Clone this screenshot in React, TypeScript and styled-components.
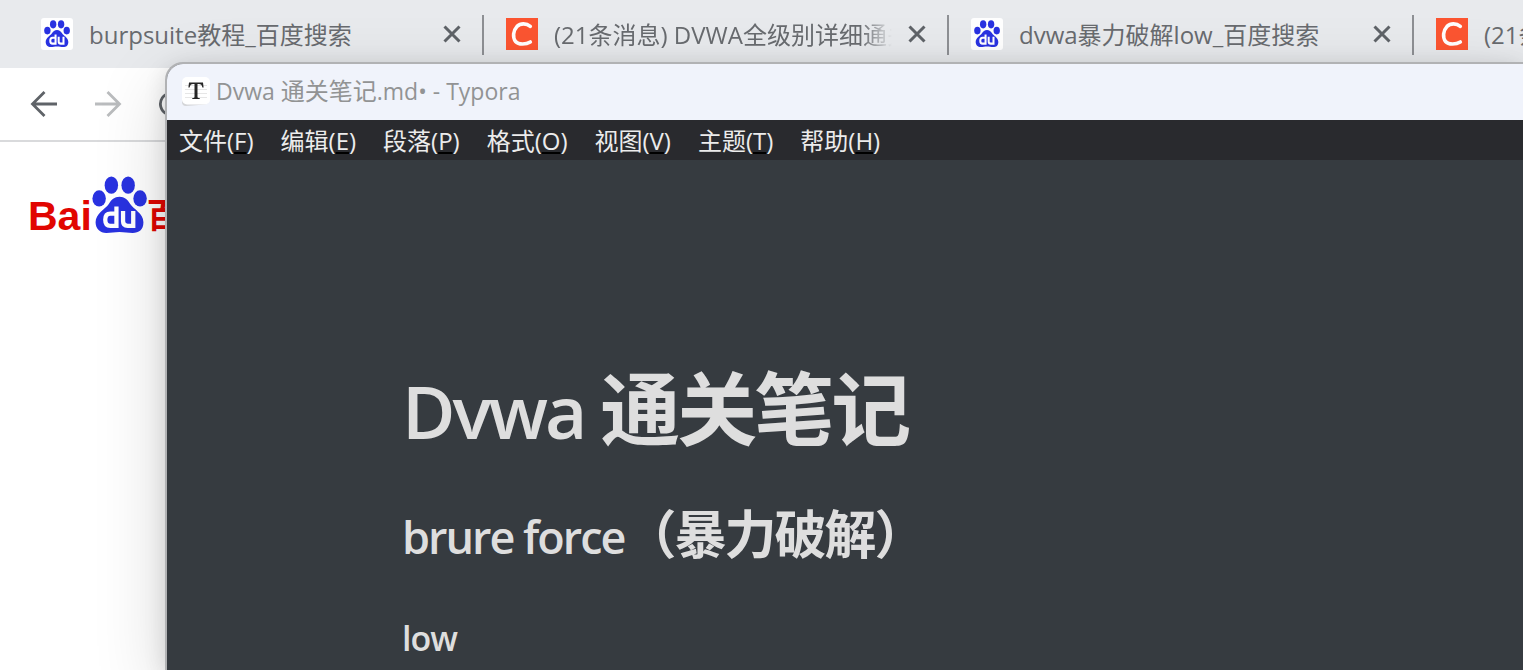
import React from 'react';
import styled, { createGlobalStyle } from 'styled-components';

const GlobalStyle = createGlobalStyle`
  * { box-sizing: border-box; }
  body {
    margin: 0;
    background: #fff;
    font-family: "Open Sans", "Noto Sans CJK SC", sans-serif;
    font-size: 24px;
    overflow: hidden;
  }
  button { font: inherit; border: 0; padding: 0; background: none; color: inherit; }
`;

const Desktop = styled.div`
  position: relative;
  min-height: 100vh;
  overflow: hidden;
`;

const TabStrip = styled.div`
  display: flex;
  height: 68px;
  padding: 15px 0 13px 19px;
  background: #e8eaed;
  overflow: hidden;
`;

const Tab = styled.div`
  display: flex;
  flex: 0 0 465px;
  min-width: 0;
  align-items: center;
  gap: 16px;
  padding: 0 21px 0 22px;
  border-right: 2px solid #8e9094;
  color: #686b6f;
`;

const TabTitle = styled.span<{ $fade?: boolean }>`
  flex: 1;
  min-width: 0;
  line-height: 40px;
  white-space: nowrap;
  overflow: hidden;
  ${p => p.$fade && 'mask-image: linear-gradient(to right, #000 91%, transparent);'}
`;

const Favicon = styled.svg`
  display: block;
  flex: none;
  width: 32px;
  height: 32px;
  margin-bottom: 2px;
`;

const CloseButton = styled.button`
  flex: none;
  width: 18px;
  height: 18px;
  margin-bottom: 2px;
  color: #5f6368;
  svg { display: block; }
`;

const Toolbar = styled.div`
  display: flex;
  align-items: center;
  gap: 36px;
  height: 74px;
  padding: 0 30px;
  border-bottom: 2px solid #d9dadc;
`;

const ToolButton = styled.button<{ $dim?: boolean }>`
  width: 28px;
  height: 28px;
  color: ${p => (p.$dim ? '#babcbe' : '#5f6368')};
  svg { display: block; }
`;

const LogoLink = styled.a`
  display: inline-flex;
  align-items: flex-end;
  height: 57px;
  margin: 34px 0 0 28px;
  color: #e10601;
  font-family: "Liberation Sans", "Noto Sans CJK SC", sans-serif;
  font-weight: 700;
  text-decoration: none;
  white-space: nowrap;
`;

const LogoWord = styled.span<{ $size: number }>`
  height: 44px;
  font-size: ${p => p.$size}px;
  line-height: 54px;
`;

const EditorWindow = styled.section`
  position: absolute;
  inset: 62px 0 0 165px;
  display: flex;
  flex-direction: column;
  border: solid #b1b2b4;
  border-width: 2px 0 0 2px;
  border-radius: 18px 0 0 0;
  background: #363b40;
  box-shadow: 0 24px 72px rgba(0, 0, 0, 0.16), 0 4px 22px rgba(0, 0, 0, 0.12);
  overflow: hidden;
`;

const TitleBar = styled.header`
  display: flex;
  align-items: center;
  gap: 6px;
  height: 56px;
  flex: none;
  padding: 0 0 2px 14px;
  background: #f0f3fb;
  color: #929394;
  white-space: nowrap;
`;

const WindowTitle = styled.span`
  line-height: 32px;
`;

const MenuBar = styled.nav`
  display: flex;
  flex: none;
  gap: 27px;
  height: 40px;
  padding: 1px 0 0 12px;
  background: #292a2e;
  color: #ececec;
`;

const MenuItem = styled.button`
  line-height: 40px;
  white-space: nowrap;
`;

const Mnemonic = styled.span`
  text-decoration: underline 2px #000;
  text-underline-offset: 2px;
  text-decoration-skip-ink: none;
`;

const Latin = styled.span<{ $size: number; $weight?: number }>`
  font-size: ${p => p.$size}px;
  font-weight: ${p => p.$weight ?? 400};
`;

const Document = styled.article`
  flex: 1;
  padding: 188px 0 0 235px;
  color: #dedede;
  white-space: nowrap;
`;

const H1 = styled.h1`
  margin: 0;
  font-size: 80px;
  font-weight: 700;
  line-height: 120px;
  letter-spacing: -3px;
`;

const H2 = styled.h2`
  margin: 31px 0 0;
  font-size: 52px;
  font-weight: 700;
  line-height: 64px;
  letter-spacing: -2px;
`;

const H3 = styled.h3`
  margin: 45px 0 0;
  font-size: 34px;
  font-weight: 600;
  line-height: 48px;
  letter-spacing: -1px;
`;

const Paw = () => (
  <g>
    <g fill="#2932e1">
      <ellipse cx="7" cy="22" rx="6.6" ry="8" />
      <ellipse cx="19" cy="9" rx="6.6" ry="8.5" />
      <ellipse cx="35.500" cy="9" rx="6.6" ry="8.5" />
      <ellipse cx="47.200" cy="22" rx="6.6" ry="8" />
      <path d="M27 20.500c5 0 8 3 10.500 7 3 5 13 9 13 18C50.500 53 46 56 40 56c-5 0-8-1-13-1s-8 1-13 1C8 56 3.500 52 3.500 45.500 3.500 37 13 32.500 16.500 27.500 19 23.500 22 20.500 27 20.500z" />
    </g>
    <g fill="none" stroke="#fff" strokeWidth="4.200">
      <path d="M24 30v19h-6q-5 0-5-6t5-6h6" />
      <path d="M30.500 34.500v10q0 4.500 4.500 4.500h5.500v-14.500" />
    </g>
  </g>
);

const BaiduIcon = () => (
  <Favicon viewBox="0 0 32 32" aria-hidden="true">
    <rect width="32" height="32" rx="3" fill="#fff" />
    <svg x="3" y="2" width="26" height="27" viewBox="0 0 54 56" preserveAspectRatio="none"><Paw /></svg>
  </Favicon>
);

const CsdnIcon = () => (
  <Favicon viewBox="0 0 32 32" aria-hidden="true">
    <rect width="32" height="32" fill="#fc5531" />
    <path d="M24.300 8.300C20.500 5.200 14.500 5 11 8.400c-4 4.200-4.500 11.100-1.500 15.100 3 3.400 10.500 3.200 14.800.4" fill="none" stroke="#fff" strokeWidth="3.600" strokeLinecap="round" />
  </Favicon>
);

const Cross = () => (
  <svg width="18" height="18" viewBox="0 0 18 18" fill="none" stroke="currentColor" strokeWidth="3">
    <path d="M1.500 1.500l15 15M16.500 1.500l-15 15" />
  </svg>
);

const TyporaIcon = () => (
  <svg width="29" height="31" viewBox="0 0 29 31" aria-hidden="true">
    <path d="M1 5h26v20q0 3-3 3.500L5 30q-4 0-4-4z" fill="#d4d5d8" />
    <rect x="1" y="1" width="28" height="27.500" rx="5" fill="#fff" />
    <path d="M4 9.500h22M4 13.500h22M4 17.500h22M4 21.500h22" stroke="#e6e6e6" />
    <path d="M8 6.500h14l.6 5h-1.200c-.5-2.600-1.400-3.600-3.400-3.600h-1.500v12.800c0 1 .6 1.300 2.200 1.400v.9h-7.400v-.9c1.600-.1 2.200-.4 2.200-1.400V7.900H12c-2 0-2.900 1-3.400 3.600H7.400z" fill="#262626" />
  </svg>
);

const tabs = [
  { title: 'burpsuite教程_百度搜索', Icon: BaiduIcon },
  { title: '(21条消息) DVWA全级别详细通关', Icon: CsdnIcon, fade: true },
  { title: 'dvwa暴力破解low_百度搜索', Icon: BaiduIcon },
  { title: '(21条消息)', Icon: CsdnIcon },
];

const menus = [
  ['文件', 'F'],
  ['编辑', 'E'],
  ['段落', 'P'],
  ['格式', 'O'],
  ['视图', 'V'],
  ['主题', 'T'],
  ['帮助', 'H'],
];

export default function App() {
  return (
    <>
      <GlobalStyle />
      <Desktop>
        <TabStrip>
          {tabs.map(({ title, Icon, fade }, i) => (
            <Tab key={i}>
              <Icon />
              <TabTitle $fade={fade}>{title}</TabTitle>
              <CloseButton aria-label="关闭标签页"><Cross /></CloseButton>
            </Tab>
          ))}
        </TabStrip>
        <Toolbar>
          <ToolButton aria-label="后退">
            <svg width="28" height="28" viewBox="0 0 28 28" fill="none" stroke="currentColor" strokeWidth="2.800">
              <path d="M27 14H3M14.500 2L2.500 14l12 12" />
            </svg>
          </ToolButton>
          <ToolButton aria-label="前进" $dim>
            <svg width="28" height="28" viewBox="0 0 28 28" fill="none" stroke="currentColor" strokeWidth="2.800">
              <path d="M1 14h24M13.500 2l12 12-12 12" />
            </svg>
          </ToolButton>
          <ToolButton aria-label="重新加载">
            <svg width="28" height="28" viewBox="0 0 28 28" fill="none" stroke="currentColor" strokeWidth="2.800">
              <path d="M21 6a11 11 0 1 0 3 11M25 2v8h-8" />
            </svg>
          </ToolButton>
        </Toolbar>
        <LogoLink href="#" aria-label="百度">
          <LogoWord $size={41}>Bai</LogoWord>
          <svg width="55" height="57" viewBox="0 0 54 56" aria-hidden="true"><Paw /></svg>
          <LogoWord $size={34}>百度</LogoWord>
        </LogoLink>
        <EditorWindow>
          <TitleBar>
            <TyporaIcon />
            <WindowTitle>
              <Latin $size={23}>Dvwa </Latin>通关笔记<Latin $size={23}>.md• - Typora</Latin>
            </WindowTitle>
          </TitleBar>
          <MenuBar>
            {menus.map(([name, key]) => (
              <MenuItem key={key}>
                {name}(<Mnemonic>{key}</Mnemonic>)
              </MenuItem>
            ))}
          </MenuBar>
          <Document>
            <H1><Latin $size={73} $weight={600}>Dvwa </Latin>通关笔记</H1>
            <H2><Latin $size={45} $weight={600}>brure force</Latin>（暴力破解）</H2>
            <H3>low</H3>
          </Document>
        </EditorWindow>
      </Desktop>
    </>
  );
}
